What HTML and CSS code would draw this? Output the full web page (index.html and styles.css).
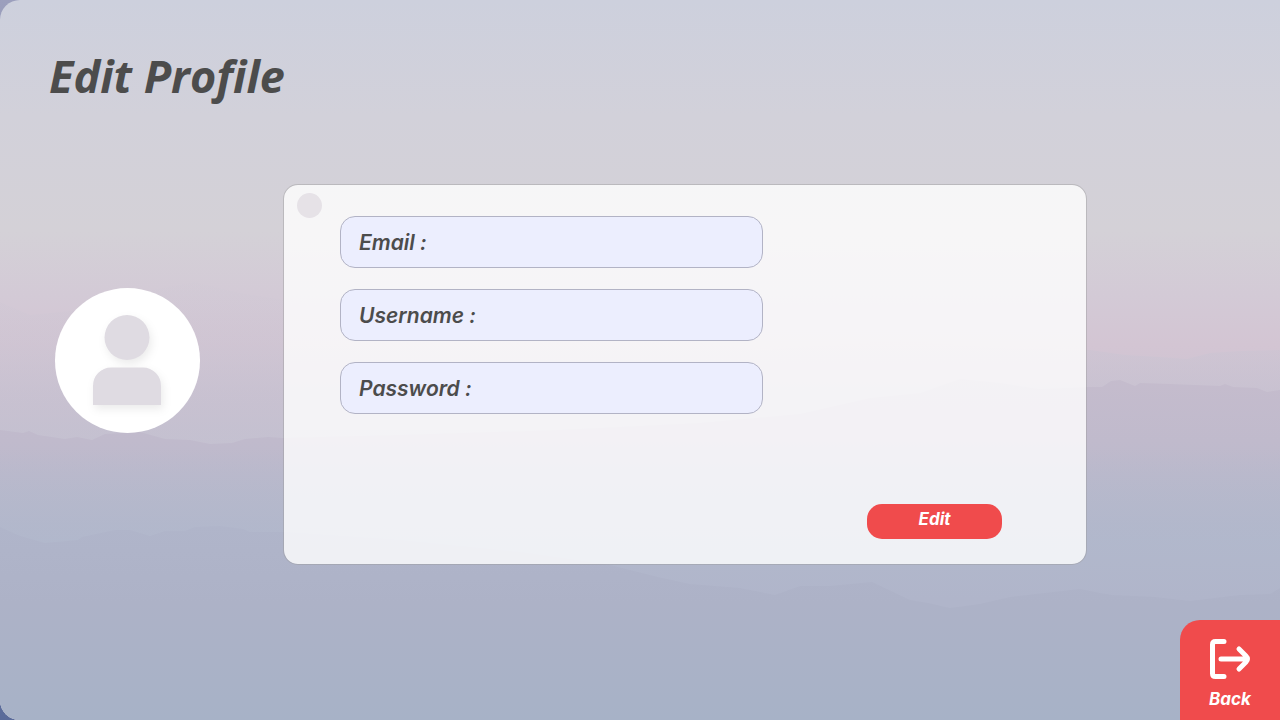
FILE: index.html
```html
<!DOCTYPE html>
<html lang="en">
<head>
<meta charset="utf-8">
<meta name="viewport" content="width=device-width, initial-scale=1">
<title>Edit Profile</title>
<link rel="stylesheet" href="styles.css">
</head>
<body>
<div class="screen">
  <svg class="hills" viewBox="0 0 1280 720" preserveAspectRatio="none" aria-hidden="true">
    <defs>
      <linearGradient id="far" gradientUnits="userSpaceOnUse" x1="0" y1="280" x2="0" y2="480">
        <stop offset="0" stop-color="#cdc8d4" stop-opacity=".08"/>
        <stop offset=".5" stop-color="#c6c2d1" stop-opacity=".5"/>
        <stop offset="1" stop-color="#b4b7cb" stop-opacity="0"/>
      </linearGradient>
      <linearGradient id="middle" gradientUnits="userSpaceOnUse" x1="0" y1="375" x2="0" y2="540">
        <stop offset="0" stop-color="#c5bccd"/>
        <stop offset=".4" stop-color="#c0bacc"/>
        <stop offset="1" stop-color="#b2b7cb"/>
      </linearGradient>
      <linearGradient id="near" gradientUnits="userSpaceOnUse" x1="0" y1="525" x2="0" y2="720">
        <stop offset="0" stop-color="#b0b5ca"/>
        <stop offset=".4" stop-color="#adb2c7"/>
        <stop offset="1" stop-color="#a7b2c7"/>
      </linearGradient>
      <linearGradient id="valley" gradientUnits="userSpaceOnUse" x1="0" y1="450" x2="0" y2="600">
        <stop offset="0" stop-color="#b1b8cc" stop-opacity="0"/>
        <stop offset=".6" stop-color="#b1b8cc" stop-opacity=".7"/>
        <stop offset="1" stop-color="#b0b5ca"/>
      </linearGradient>
    </defs>
    <path fill="url(#far)" d="M0 302L30 315L80 310L140 292L195 282L240 293L285 300L420 295L600 330L760 350L900 340L1000 348L1090 350L1125 355L1160 357L1187 359L1210 353L1240 351L1280 350V480H0Z"/>
    <path fill="url(#middle)" d="M0 430L23 433L29 431L38 435L65 439L77 437L92 440L105 434L140 432L165 439L190 440L210 444L232 443L245 439L268 437L283 438L400 435L560 430L700 423L800 414L870 398L920 393L960 379L1000 383L1040 389L1087 387L1102 387L1111 381L1120 380L1135 386L1140 383L1170 384L1220 386L1225 384L1233 387L1257 388L1267 392L1280 390V720H0Z"/>
    <path fill="url(#valley)" d="M0 440H1280V720H0Z"/>
    <path fill="url(#near)" d="M0 527L20 536L45 543L78 540L82 537L115 530L130 530L150 536L165 531L185 531L195 527L220 526L243 529L250 532L283 532L400 540L520 552L610 565L662 578L690 584L740 588L775 595L800 586L830 586L872 582L910 600L928 603L950 608L980 604L1010 597L1080 589L1100 593L1112 595L1155 597L1190 601L1240 595L1270 594L1280 588V720H0Z"/>
  </svg>
  <header class="top">
    <h1 class="title">Edit Profile</h1>
  </header>
  <main class="profile">
    <div class="avatar" role="img" aria-label="Profile picture">
      <svg class="person" viewBox="0 0 145 145" aria-hidden="true">
        <circle cx="72" cy="49.500" r="22.500"/>
        <path d="M38 117V98A18 18 0 0 1 56 79.500H88A18 18 0 0 1 106 98V117Z"/>
      </svg>
    </div>
    <form class="panel">
      <div class="content">
        <span class="dot"></span>
        <div class="fields">
          <div class="field"><label for="email">Email :</label><input id="email" type="email"></div>
          <div class="field"><label for="username">Username :</label><input id="username" type="text"></div>
          <div class="field"><label for="password">Password :</label><input id="password" type="password"></div>
        </div>
      </div>
      <button class="edit" type="submit">Edit</button>
    </form>
  </main>
  <button class="back" type="button">
    <svg class="exit" viewBox="0 0 42 42" aria-hidden="true">
      <path d="M15 3.500H6.500Q3.500 3.500 3.500 6.500V35.500Q3.500 38.500 6.500 38.500H15M12 21H38M30 11L37 18Q40 21 37 24L30 31"/>
    </svg>
    <span>Back</span>
  </button>
</div>
</body>
</html>
```
FILE: styles.css
```css
* {
  box-sizing: border-box;
}

body {
  margin: 0;
  background: linear-gradient(#9c9fbd, #5a6b9a);
  font-family: Inter, "Liberation Sans", sans-serif;
}

button,
input {
  border: 0;
  font: inherit;
}

.screen {
  position: relative;
  display: flex;
  flex-direction: column;
  min-height: 100vh;
  overflow: hidden;
  border-radius: 20px 0 0 20px;
  background: linear-gradient(#cdd0dd 0%, #d2d1da 16%, #d4d1d7 32%, #d3cad6 41%, #d3c5d3 48%, #cbc2d1 56%, #c5c2d1 63%);
}

.hills {
  position: absolute;
  inset: 0;
  width: 100%;
  height: 100%;
}

.top,
.profile,
.back {
  position: relative;
}

.top {
  padding: 44px 49px 0;
}

.title {
  margin: 0;
  color: #4c4c4c;
  font: italic 700 45px/64px "Open Sans", "Noto Sans", sans-serif;
}

.profile {
  display: flex;
  align-items: center;
  gap: 83px;
  margin-top: 76px;
  padding: 0 193px 0 55px;
}

.avatar {
  flex: none;
  width: 145px;
  height: 145px;
  margin-top: -28px;
  border-radius: 50%;
  background: #fff;
}

.person {
  display: block;
  fill: #dfdbe2;
  filter: drop-shadow(2px 4px 4px rgba(0, 0, 0, 0.08));
}

.panel {
  display: flex;
  flex: 1;
  flex-direction: column;
  justify-content: space-between;
  min-height: 381px;
  padding: 8px 84px 25px 13px;
  border: 1px solid rgba(150, 150, 150, 0.4);
  border-radius: 15px;
  background: rgba(255, 255, 255, 0.8);
  background-clip: padding-box;
}

.content {
  display: flex;
  gap: 18px;
}

.dot {
  flex: none;
  width: 25px;
  height: 25px;
  border-radius: 50%;
  background: #e6e2e7;
}

.fields {
  display: flex;
  flex: 0 1 423px;
  flex-direction: column;
  gap: 21px;
  min-width: 0;
  padding-top: 23px;
}

.field {
  display: flex;
  align-items: center;
  gap: 8px;
  height: 52px;
  padding: 0 18px;
  border: 1px solid #b2b3c5;
  border-radius: 15px;
  background: #eceefe;
  color: #4c4c4c;
  font-size: 21px;
  font-style: italic;
  font-weight: 600;
}

.field label {
  white-space: nowrap;
}

.field input {
  flex: 1;
  min-width: 0;
  background: transparent;
  color: inherit;
  outline: none;
}

.edit {
  align-self: flex-end;
  width: 135px;
  height: 35px;
  padding: 0 0 6px;
  border-radius: 15px;
  background: #f04b4c;
  color: #fff;
  font-size: 17px;
  font-style: italic;
  font-weight: 700;
}

.back {
  display: flex;
  flex-direction: column;
  align-items: center;
  align-self: flex-end;
  gap: 9px;
  width: 100px;
  height: 100px;
  margin-top: auto;
  padding: 18px 0 0;
  border-radius: 20px 0 0;
  background: #f04b4c;
  color: #fff;
  font-size: 17px;
  font-style: italic;
  font-weight: 700;
}

.exit {
  width: 42px;
  height: 42px;
  fill: none;
  stroke: #fff;
  stroke-width: 5;
  stroke-linecap: round;
  stroke-linejoin: round;
}
```
